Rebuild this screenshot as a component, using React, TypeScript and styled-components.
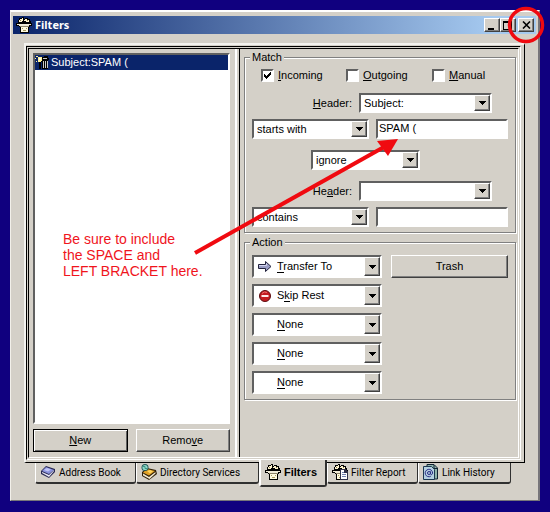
import React from 'react';
import styled, { createGlobalStyle, css } from 'styled-components';

const face = '#d4d0c8';
const navy = '#0a246a';
const red = '#f00a10';

const GlobalStyle = createGlobalStyle`
  * { box-sizing: border-box; }
  body {
    margin: 0;
    background: #10007f;
    color: #000;
    font: 11px/13px "Liberation Sans", Arial, sans-serif;
  }
  button, input, select { font: inherit; color: inherit; margin: 0; border-radius: 0; }
`;

const raised = css`
  border: 1px solid;
  border-color: #fff #404040 #404040 #fff;
  box-shadow: inset -1px -1px #808080;
`;

const sunken = css`
  border: 2px solid;
  border-color: #606060 #fff #fff #606060;
`;

const Desktop = styled.div`
  position: relative;
  display: flex;
  min-height: 100vh;
  padding: 10px 10px 11px;
`;

const Window = styled.main`
  flex: 1;
  min-width: 0;
  display: flex;
  flex-direction: column;
  padding: 4px 2px 13px;
  background: ${face};
  border: 1px solid;
  border-width: 2px 2px 1px 1px;
  border-color: #fff #77757a #77757a #f2f0ea;
`;

const TitleBar = styled.header`
  display: flex;
  align-items: center;
  height: 18px;
  padding: 0 2px 0 3px;
  gap: 3px;
  background: linear-gradient(90deg, ${navy}, #a6caf0 92%);
`;

const Title = styled.h1`
  flex: 1;
  margin: 0;
  color: #fff;
  font: bold 11px/16px "Noto Sans", "Open Sans", sans-serif;
`;

const WindowButtons = styled.div`
  display: flex;
`;

const WindowButton = styled.button<{ $apart?: boolean }>`
  ${raised}
  display: grid;
  place-items: center;
  width: 16px;
  height: 14px;
  padding: 0;
  margin-left: ${p => (p.$apart ? 2 : 0)}px;
  background: ${face};
`;

const Page = styled.section`
  flex: 1;
  display: flex;
  margin: 9px 11px 0;
  padding: 1px 3px 2px 0;
  border: 1px solid;
  border-width: 2px 1px 1px 2px;
  border-color: #f4f3ef #000 #000 #f4f3ef;
`;

const Panes = styled.div`
  flex: 1;
  display: grid;
  grid-template-columns: minmax(0, 206fr) 5px minmax(0, 278fr);
  border: 3px double;
  border-color: #000 #fff #fff #000;
`;

const Divider = styled.div`
  border-left: 2px solid #fff;
  border-right: 1px solid #000;
`;

const ListPane = styled.div`
  display: flex;
  flex-direction: column;
  gap: 5px;
  padding: 4px 5px 5px 4px;
`;

const FilterList = styled.ul`
  ${sunken}
  flex: 1;
  margin: 0;
  padding: 0;
  list-style: none;
  background: #fff;
`;

const FilterItem = styled.li`
  display: flex;
  align-items: center;
  height: 15px;
  gap: 1px;
  color: #fff;
  background: ${navy};
`;

const ButtonRow = styled.div`
  display: grid;
  grid-template-columns: 1fr 1fr;
  gap: 8px;
`;

const PushButton = styled.button<{ $isDefault?: boolean }>`
  ${raised}
  height: 23px;
  padding: 0;
  background: ${face};
  ${p => p.$isDefault && css`
    border-color: #000;
    box-shadow: inset 1px 1px #fff, inset -1px -1px #606060;
  `}
`;

const SettingsPane = styled.div`
  display: flex;
  flex-direction: column;
  gap: 3px;
  padding: 2px 2px 0 4px;
`;

const Group = styled.fieldset`
  min-width: 0;
  margin: 0;
  padding: 0 7px 5px;
  border: 1px solid #808080;
  box-shadow: 1px 1px #fff, inset 1px 1px #fff;
`;

const Legend = styled.legend`
  margin-left: -2px;
  padding: 0 2px;
  background: ${face};
`;

const MatchRows = styled.div`
  display: flex;
  flex-direction: column;
  gap: 11px;
  padding-top: 5px;
`;

const CheckRow = styled.div`
  display: grid;
  grid-template-columns: 85fr 86fr 76fr;
  padding-left: 9px;
`;

const CheckLabel = styled.label`
  display: flex;
  align-items: center;
  gap: 4px;
  height: 13px;
`;

const CheckCell = styled.span`
  display: grid;
  width: 13px;
  height: 13px;
  > * { grid-area: 1 / 1; }
  > svg { visibility: hidden; place-self: center; pointer-events: none; }
  > input:checked + svg { visibility: visible; }
`;

const CheckInput = styled.input`
  ${sunken}
  appearance: none;
  width: 13px;
  height: 13px;
  background: #fff;
`;

const Criterion = styled.div`
  display: flex;
  flex-direction: column;
  gap: 6px;
`;

const HeaderRow = styled.label`
  display: grid;
  grid-template-columns: 100fr 133fr;
  align-items: center;
  gap: 7px;
  padding-right: 16px;
  text-align: right;
`;

const TestRow = styled.div`
  display: grid;
  grid-template-columns: 117fr 132fr;
  gap: 7px;
`;

const JoinRow = styled.div`
  display: grid;
  grid-template-columns: 59fr 109fr 88fr;
  > * { grid-column: 2; }
`;

const DropFrame = styled.div<{ $tall?: boolean }>`
  ${sunken}
  position: relative;
  display: grid;
  grid-template-columns: minmax(0, 1fr) 16px;
  height: ${p => (p.$tall ? 23 : 20)}px;
  background: #fff;
`;

const DropSelect = styled.select<{ $indent: number }>`
  appearance: none;
  grid-area: 1 / 1 / 2 / 3;
  min-width: 0;
  padding: 0 16px 0 ${p => p.$indent}px;
  border: 0;
  background: transparent;
`;

const DropArrow = styled.span`
  ${raised}
  grid-area: 1 / 2;
  display: grid;
  place-items: center;
  background: ${face};
  pointer-events: none;
`;

const DropIcon = styled.span`
  position: absolute;
  left: 4px;
  top: 2px;
  display: flex;
  pointer-events: none;
`;

const MnemonicLine = styled.span<{ $left: number; $width: number }>`
  position: absolute;
  left: ${p => p.$left}px;
  bottom: 3px;
  width: ${p => p.$width}px;
  height: 1px;
  background: #000;
  pointer-events: none;
`;

const TextBox = styled.input`
  ${sunken}
  width: 100%;
  height: 20px;
  padding: 0 0 2px 1px;
  background: #fff;
`;

const ActionGrid = styled.div`
  display: grid;
  grid-template-columns: 130fr 117fr;
  gap: 6px 9px;
  padding-top: 6px;
  > ${DropFrame} { grid-column: 1; }
`;

const Tabs = styled.nav`
  display: grid;
  grid-template-columns: 101fr 123fr 68fr 91fr 93fr;
  align-items: start;
  margin: 0 25px 0 22px;
`;

const Tab = styled.button<{ $active?: boolean }>`
  display: flex;
  align-items: center;
  gap: 3px;
  height: 21px;
  padding: 0 0 1px 4px;
  white-space: nowrap;
  background: ${face};
  border: 1px solid;
  border-width: 0 1px 2px 1px;
  border-color: #fff #303030 #303030 #fff;
  border-radius: 0 0 3px 3px;
  font-size: 10px;
  font-family: "Roboto", sans-serif;
  ${p => p.$active && css`
    position: relative;
    height: 27px;
    margin-top: -3px;
    border-left-width: 2px;
    border-right-width: 2px;
    font-size: 11px;
    font-weight: bold;
    font-family: "Liberation Sans", Arial, sans-serif;
  `}
`;

const Annotation = styled.p`
  position: absolute;
  left: 63px;
  top: 231px;
  margin: 0;
  color: #f0141c;
  font-size: 14px;
  line-height: 16px;
  white-space: pre;
`;

const Marks = styled.svg`
  position: absolute;
  left: 0;
  top: 0;
  pointer-events: none;
`;

const Basket = ({ report }: { report?: boolean }) => (
  <svg width="16" height="16" viewBox="0 0 16 16" aria-hidden="true" shapeRendering="crispEdges">
    <path d="M3 1h3v-1h2v2h1v-1h3v1h2v2h1v2h-13v-3h1z" fill="#000" />
    <path d="M4 2h2v-1h1v3h-1v1h-3v-2h1zM9 2h2v1h2v2h-3v-1h-2v-1h1z" fill="#fff5cf" />
    <path d="M4 3h1v1h-1zM11 3h1v1h-1z" fill="#8c7c50" />
    <path d="M0 6h16v3h-2v1h-1v6h-9v-6h-1v-1h-3z" fill="#000" />
    <path d="M1 7h14v1h-2v1h-10v-1h-2z" fill="#f0ebd8" />
    <path d="M4 9h9v1h-9z" fill="#8c8468" />
    <path d="M5 10h7v5h-7z" fill="#fffbe0" />
    <path d="M6 11h1v1h-1zM10 11h1v1h-1zM7 13h3v1h-3z" fill="#a89c60" />
    {report && (
      <>
        <path d="M8 5h5l3 3v8h-8z" fill="#303048" />
        <path d="M9 6h3v3h3v6h-6z" fill="#fff" />
        <path d="M10 8h2v1h-2zM10 10h4v1h-4zM10 12h4v1h-4z" fill="#7080b0" />
      </>
    )}
  </svg>
);

const FilterItemIcon = () => (
  <svg width="15" height="15" viewBox="0 0 15 15" aria-hidden="true" shapeRendering="crispEdges">
    <path d="M1 1h2v1h-2zM3 2h4v5h-4zM1 6h1v1h-1zM0 3h1v1h-1z" fill="#fff29a" />
    <path d="M4 3h2v2h-2z" fill="#fffce0" />
    <path d="M7 2h2v-1h4v2h1v2h-1v9h-6v-7h-1v-1h1z" fill="#000" />
    <path d="M8 3h4v1h-4zM8 6h1v7h-1zM10 6h1v7h-1zM12 6h1v7h-1z" fill="#c9c9c9" />
    <path d="M4 7h2v7h-2z" fill="#000" />
  </svg>
);

const BookIcon = () => (
  <svg width="16" height="16" viewBox="0 0 16 16" aria-hidden="true">
    <path d="M1 7 6 2l9 3v3l-6 6-8-4z" fill="#272752" />
    <path d="M2 9v-1l7 3 5-5v1l-5 6z" fill="#e8e8f4" />
    <path d="M2 7 6 3l8 3-5 4z" fill="#8b93dc" />
    <path d="M4 6l3-2 4 1.5-3 2z" fill="#c2c6fa" />
  </svg>
);

const DirectoryIcon = () => (
  <svg width="16" height="16" viewBox="0 0 16 16" aria-hidden="true">
    <path d="M1 8 6 4l9 2 1 4-8 6-7-4z" fill="#302008" />
    <path d="M2 9.500 8 13l6.500-5v1.500L8.500 15 2 11.500z" fill="#f3ead0" />
    <path d="M2 8.500 6 5l8 2-6 4.500z" fill="#dfa024" />
    <path d="M6 7l3-1 3 1.500-3 2z" fill="#ffd45c" />
    <circle cx="4" cy="3.500" r="3.500" fill="#205858" />
    <circle cx="4" cy="3.500" r="2.600" fill="#8fd8c8" />
    <path d="M2 2.500h2v2h2" stroke="#3c9484" fill="none" />
  </svg>
);

const HistoryIcon = () => (
  <svg width="16" height="16" viewBox="0 0 16 16" aria-hidden="true">
    <path d="M4 .500h7l3.500 3.500v11H4z" fill="#8fb4ac" stroke="#123" />
    <path d="M11 1v3.500h3" fill="none" stroke="#123" />
    <path d="M.500 2.500h8l3 3v10H.500z" fill="#b4d0e0" stroke="#1c3850" />
    <circle cx="6" cy="9" r="1.500" fill="none" stroke="#2a2c84" />
    <path d="M7.600 7.300v2.500c0 1.400 2 1 2-.8a3.700 3.700 0 1 0-1.800 3.200" fill="none" stroke="#2a2c84" />
  </svg>
);

const TransferIcon = () => (
  <svg width="14" height="15" viewBox="0 0 14 15" aria-hidden="true">
    <path d="M.500 5.500h7v-3l5.500 5-5.500 5v-3h-7z" fill="#9a9dc4" stroke="#22223c" />
    <path d="M1 6.500h7.500v-2" fill="none" stroke="#d4d6f0" />
  </svg>
);

const StopIcon = () => (
  <svg width="14" height="15" viewBox="0 0 14 15" aria-hidden="true">
    <circle cx="7" cy="8" r="5.500" fill="#c41c20" stroke="#5c0c10" />
    <path d="M4 5.500a4 4 0 0 1 5-1" fill="none" stroke="#f07070" />
    <path d="M3.500 7h7v2h-7z" fill="#ffe8e8" />
  </svg>
);

const Triangle = () => (
  <svg width="7" height="4" viewBox="0 0 7 4" aria-hidden="true" shapeRendering="crispEdges">
    <path d="M0 0h7v1h-1v1h-1v1h-1v1h-1v-1h-1v-1h-1v-1h-1z" />
  </svg>
);

type DropProps = {
  value: string;
  label?: string;
  tall?: boolean;
  icon?: React.ReactNode;
  mnemonic?: [number, number];
};

const Drop = ({ value, label, tall, icon, mnemonic }: DropProps) => (
  <DropFrame $tall={tall}>
    <DropSelect $indent={tall ? 23 : 3} aria-label={label} defaultValue={value}>
      <option>{value}</option>
    </DropSelect>
    <DropArrow><Triangle /></DropArrow>
    {icon && <DropIcon>{icon}</DropIcon>}
    {mnemonic && <MnemonicLine $left={mnemonic[0]} $width={mnemonic[1]} />}
  </DropFrame>
);

const Check = ({ checked, children }: { checked?: boolean; children: React.ReactNode }) => (
  <CheckLabel>
    <CheckCell>
      <CheckInput type="checkbox" defaultChecked={checked} />
      <svg width="7" height="7" viewBox="0 0 7 7" shapeRendering="crispEdges">
        <path d="M0 2h1v1h1v1h1v-1h1v-1h1v-1h1v-1h1v3h-1v1h-1v1h-1v1h-1v1h-1v-1h-1v-1h-1z" />
      </svg>
    </CheckCell>
    <span>{children}</span>
  </CheckLabel>
);

export default function App() {
  return (
    <>
      <GlobalStyle />
      <Desktop>
        <Window>
          <TitleBar>
            <Basket />
            <Title>Filters</Title>
            <WindowButtons>
              <WindowButton aria-label="Minimize">
                <svg width="10" height="9" viewBox="0 0 10 9"><path d="M1 7h6v2H1z" /></svg>
              </WindowButton>
              <WindowButton aria-label="Maximize">
                <svg width="10" height="9" viewBox="0 0 10 9" shapeRendering="crispEdges">
                  <path d="M0 0h9v9H0zM1 2v6h7V2z" fillRule="evenodd" />
                </svg>
              </WindowButton>
              <WindowButton $apart aria-label="Close">
                <svg width="9" height="8" viewBox="0 0 9 8">
                  <path d="M1 .500 8 7.500M8 .500 1 7.500" stroke="#000" strokeWidth="1.600" />
                </svg>
              </WindowButton>
            </WindowButtons>
          </TitleBar>

          <Page>
            <Panes>
              <ListPane>
                <FilterList>
                  <FilterItem><FilterItemIcon />Subject:SPAM (</FilterItem>
                </FilterList>
                <ButtonRow>
                  <PushButton $isDefault><u>N</u>ew</PushButton>
                  <PushButton>Remo<u>v</u>e</PushButton>
                </ButtonRow>
              </ListPane>
              <Divider />
              <SettingsPane>
                <Group>
                  <Legend>Match</Legend>
                  <MatchRows>
                    <CheckRow>
                      <Check checked><u>I</u>ncoming</Check>
                      <Check><u>O</u>utgoing</Check>
                      <Check><u>M</u>anual</Check>
                    </CheckRow>
                    <Criterion>
                      <HeaderRow>
                        <span><u>H</u>eader:</span>
                        <Drop value="Subject:" />
                      </HeaderRow>
                      <TestRow>
                        <Drop value="starts with" label="First test" />
                        <TextBox aria-label="First text" defaultValue="SPAM (" />
                      </TestRow>
                    </Criterion>
                    <JoinRow><Drop value="ignore" label="Combine" /></JoinRow>
                    <Criterion>
                      <HeaderRow>
                        <span>He<u>a</u>der:</span>
                        <Drop value="" />
                      </HeaderRow>
                      <TestRow>
                        <Drop value="contains" label="Second test" />
                        <TextBox aria-label="Second text" />
                      </TestRow>
                    </Criterion>
                  </MatchRows>
                </Group>
                <Group>
                  <Legend>Action</Legend>
                  <ActionGrid>
                    <Drop tall value="Transfer To" label="Action 1" icon={<TransferIcon />} mnemonic={[23, 7]} />
                    <PushButton>Trash</PushButton>
                    <Drop tall value="Skip Rest" label="Action 2" icon={<StopIcon />} mnemonic={[30, 6]} />
                    <Drop tall value="None" label="Action 3" mnemonic={[23, 8]} />
                    <Drop tall value="None" label="Action 4" mnemonic={[23, 8]} />
                    <Drop tall value="None" label="Action 5" mnemonic={[23, 8]} />
                  </ActionGrid>
                </Group>
              </SettingsPane>
            </Panes>
          </Page>

          <Tabs>
            <Tab><BookIcon />Address Book</Tab>
            <Tab><DirectoryIcon />Directory Services</Tab>
            <Tab $active><Basket />Filters</Tab>
            <Tab><Basket report />Filter Report</Tab>
            <Tab><HistoryIcon />Link History</Tab>
          </Tabs>
        </Window>

        <Annotation>{'Be sure to include\nthe SPACE and\nLEFT BRACKET here.'}</Annotation>
        <Marks width="550" height="300" viewBox="0 0 550 300" aria-hidden="true">
          <path d="M195 253 384 147" stroke={red} strokeWidth="4" />
          <path d="M398 139 377 141 388 156z" fill={red} />
          <circle cx="526" cy="25" r="16.500" fill="none" stroke={red} strokeWidth="3.500" />
        </Marks>
      </Desktop>
    </>
  );
}
